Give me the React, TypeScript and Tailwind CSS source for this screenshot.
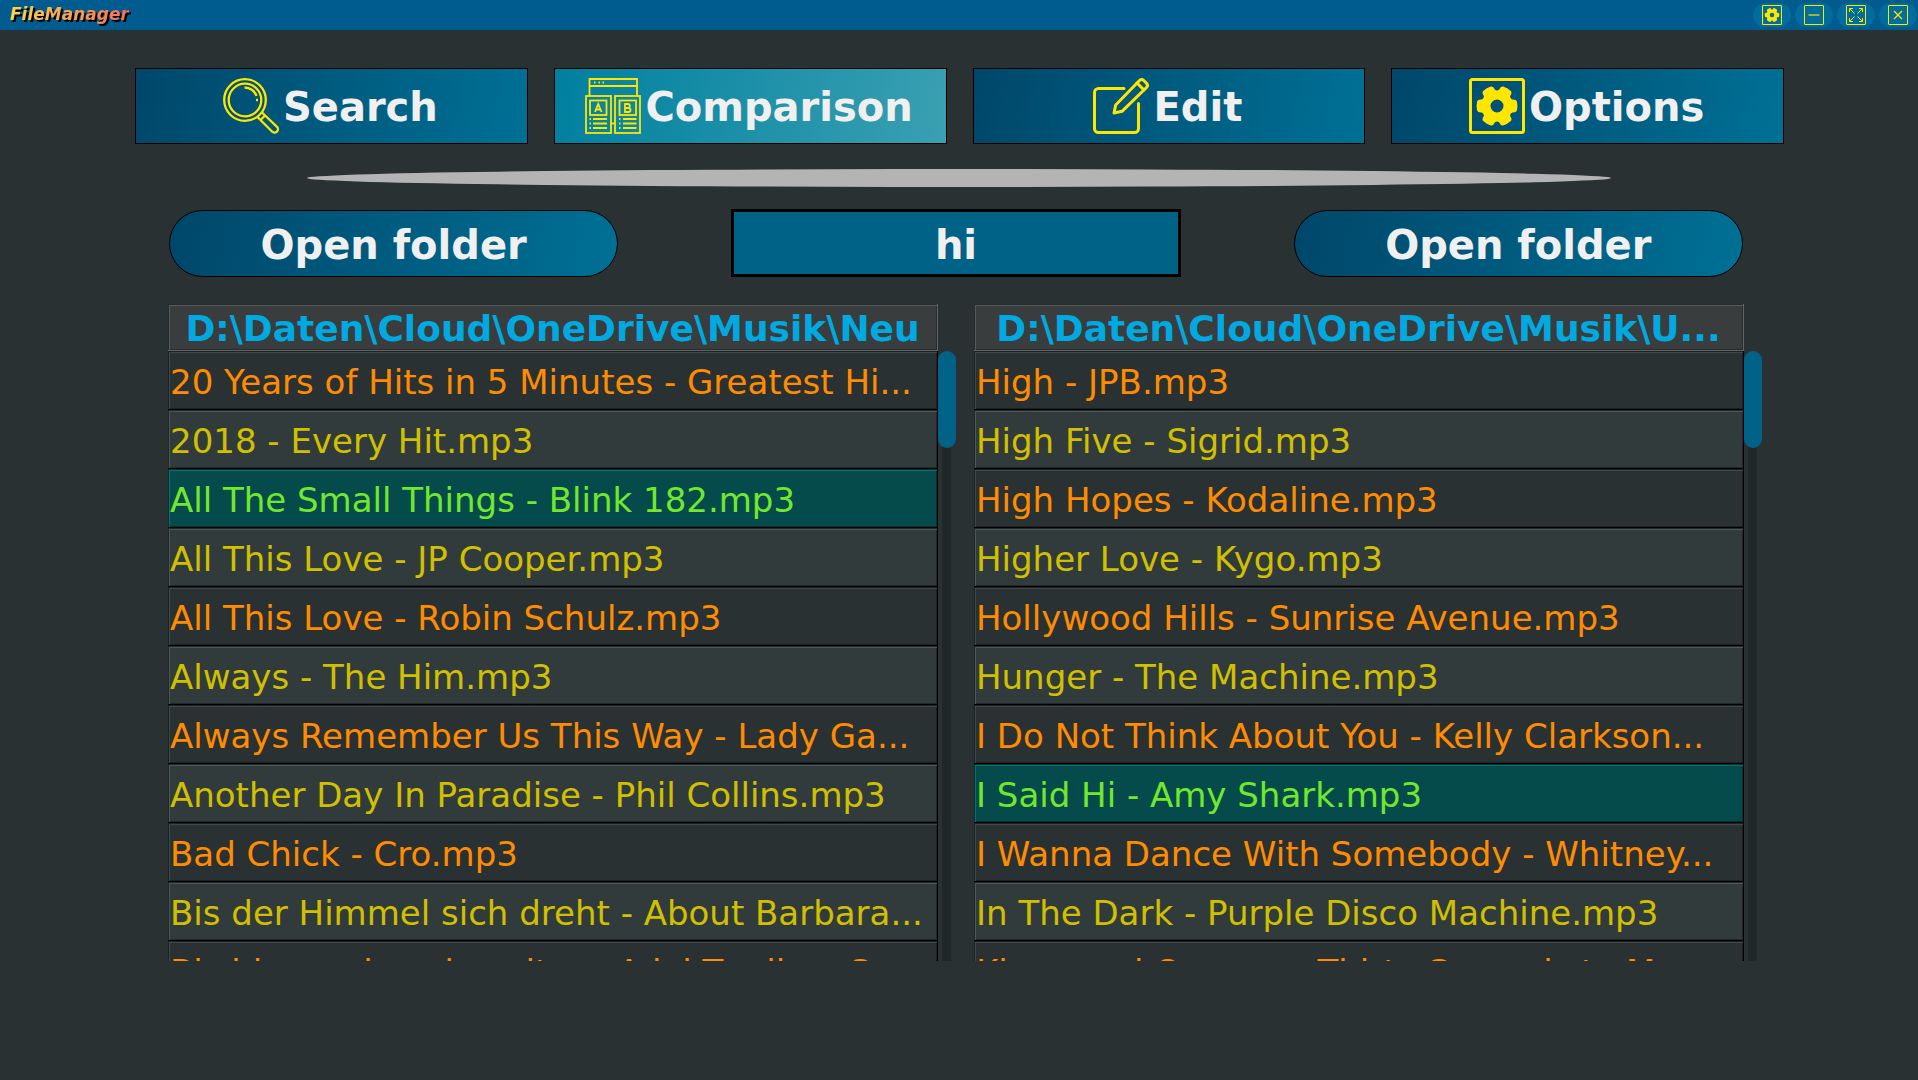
import type { ReactNode } from "react";

type Row = { name: string; match?: boolean };

const leftRows: Row[] = [
  { name: "20 Years of Hits in 5 Minutes - Greatest Hi..." },
  { name: "2018 - Every Hit.mp3" },
  { name: "All The Small Things - Blink 182.mp3", match: true },
  { name: "All This Love - JP Cooper.mp3" },
  { name: "All This Love - Robin Schulz.mp3" },
  { name: "Always - The Him.mp3" },
  { name: "Always Remember Us This Way - Lady Ga..." },
  { name: "Another Day In Paradise - Phil Collins.mp3" },
  { name: "Bad Chick - Cro.mp3" },
  { name: "Bis der Himmel sich dreht - About Barbara..." },
  { name: "Bis hier und noch weiter - Adel Tawil.mp3" },
];

const rightRows: Row[] = [
  { name: "High - JPB.mp3" },
  { name: "High Five - Sigrid.mp3" },
  { name: "High Hopes - Kodaline.mp3" },
  { name: "Higher Love - Kygo.mp3" },
  { name: "Hollywood Hills - Sunrise Avenue.mp3" },
  { name: "Hunger - The Machine.mp3" },
  { name: "I Do Not Think About You - Kelly Clarkson..." },
  { name: "I Said Hi - Amy Shark.mp3", match: true },
  { name: "I Wanna Dance With Somebody - Whitney..." },
  { name: "In The Dark - Purple Disco Machine.mp3" },
  { name: "Kings and Queens - Thirty Seconds to M..." },
];

// Six rounded teeth around (cx, cy), joined by shallow curved valleys.
function gearPath(cx: number, cy: number, outer: number, inner: number) {
  const pts: string[] = [];
  for (let i = 0; i < 6; i++) {
    const base = (i * Math.PI) / 3;
    const at = (r: number, d: number) =>
      `${(cx + r * Math.cos(base + d)).toFixed(2)} ${(cy + r * Math.sin(base + d)).toFixed(2)}`;
    pts.push(`${i === 0 ? "M" : "L"}${at(inner, -0.4)}`);
    pts.push(`Q${at(outer, -0.34)} ${at(outer, -0.22)}`);
    pts.push(`Q${at(outer + 0.6, 0)} ${at(outer, 0.22)}`);
    pts.push(`Q${at(outer, 0.34)} ${at(inner, 0.4)}`);
    pts.push(`Q${at(inner - 1.5, 0.5236)} ${at(inner, 0.647)}`);
  }
  return pts.join(" ") + "Z";
}

function SearchIcon() {
  return (
    <svg viewBox="0 0 56 56" className="size-14 shrink-0" fill="none" stroke="#ffe600" strokeWidth="2.300" aria-hidden="true">
      <circle cx="22" cy="22" r="20.800" />
      <circle cx="22" cy="22" r="16.300" />
      <path d="M21.500 9.500 A12.500 12.500 0 0 1 33.500 18" />
      <path d="M33 22h2" />
      <path d="M34.500 39 L49 53.500 A3.200 3.200 0 0 0 54 48.800 L39 34.500" />
      <path d="M37.500 42 L42 37.500" />
    </svg>
  );
}

function CompareIcon() {
  return (
    <svg viewBox="0 0 56 56" className="size-14 shrink-0" fill="none" stroke="#ffe600" strokeWidth="1.800" aria-hidden="true">
      <path d="M4.500 18V1h47.500v17M4.500 8h47.500" />
      <path d="M9 4.500h1.500M13.500 4.500h1.500M17.500 4.500h1.500" />
      <rect x="1" y="18" width="25" height="37" />
      <rect x="30" y="18" width="25" height="37" />
      <rect x="5" y="22.500" width="16.500" height="14.500" />
      <rect x="34.500" y="22.500" width="16.500" height="14.500" />
      <path d="M10 34 L13.200 26 L16.500 34M11 31.500h4.500" />
      <path d="M40 26v8h3.500q2 0 2-2t-2-2H40h3q1.800 0 1.800-2t-1.800-2Z" />
      <path d="M4.500 41h1.500M8 41h14M4.500 45.500h1.500M8 45.500h14M4.500 50h1.500M8 50h14" />
      <path d="M34 41h1.500M38 41h13.500M34 45.500h1.500M38 45.500h13.500M34 50h1.500M38 50h13.500" />
      <path d="M26 45.500h4" />
    </svg>
  );
}

function EditIcon() {
  return (
    <svg viewBox="0 0 56 56" className="size-14 shrink-0" fill="none" stroke="#ffe600" strokeWidth="3" strokeLinecap="round" strokeLinejoin="round" aria-hidden="true">
      <path d="M31 10.500H5.500a4 4 0 0 0-4 4V50.500a4 4 0 0 0 4 4H41.500a4 4 0 0 0 4-4V25.500" />
      <path d="M21 35l1.700-8L46.500 2.500q2.200-2 4.300 0l2.700 2.700q2 2.200 0 4.300L29 33.300Z" />
      <path d="M44 5l7 7" />
    </svg>
  );
}

function GearIcon({ className }: { className: string }) {
  return (
    <svg viewBox="0 0 56 56" className={className} aria-hidden="true">
      <rect x="1.500" y="1.500" width="53" height="53" rx="2" fill="none" stroke="#ffe600" strokeWidth="3" />
      <path
        d={`${gearPath(28, 28, 20.4, 16.4)} M34.500 28a6.500 6.500 0 1 0 -13 0a6.500 6.500 0 1 0 13 0Z`}
        fill="#ffe600"
        fillRule="evenodd"
      />
    </svg>
  );
}

function NavButton({ icon, label, active }: { icon: ReactNode; label: string; active?: boolean }) {
  return (
    <button
      type="button"
      className={`flex h-[76px] items-center justify-center border border-black pr-[2px] text-[40px] font-bold text-[#f0f0f0] ${
        active
          ? "bg-[linear-gradient(100deg,#00809f,#3aa0b2)]"
          : "bg-[linear-gradient(100deg,#00476a,#007095)]"
      }`}
    >
      {icon}
      <span className="pt-[2px] pl-1">{label}</span>
    </button>
  );
}

function OpenFolder() {
  return (
    <button
      type="button"
      className="h-[67px] rounded-full border border-black bg-[linear-gradient(100deg,#00476a,#007095)] pt-[2px] text-[40px] font-bold text-[#f0f0f0]"
    >
      Open folder
    </button>
  );
}

function WindowButton({ label, children }: { label: string; children: ReactNode }) {
  return (
    <button type="button" aria-label={label} className="flex h-6 w-[38px] items-center justify-center rounded-full bg-[#006d9c]">
      {children}
    </button>
  );
}

function FramedGlyph({ children }: { children: ReactNode }) {
  return (
    <svg viewBox="0 0 20 20" className="size-5" fill="none" stroke="#ffe600" aria-hidden="true">
      <rect x="0.500" y="0.500" width="19" height="19" rx="0.500" />
      {children}
    </svg>
  );
}

function FileTable({ path, rows }: { path: string; rows: Row[] }) {
  return (
    <div className="flex min-w-0 flex-1">
      <div className="h-[657px] min-w-0 flex-1 overflow-hidden">
        <table className="w-full table-fixed border-separate border-spacing-0 whitespace-nowrap text-[34px] leading-[54px]">
          <thead>
            <tr>
              <th className="h-[47px] overflow-hidden border-r border-b border-[#626666] bg-[#393d3d] p-0 pt-1 text-center text-[36px] leading-[42px] font-bold text-[#00a9e0] shadow-[inset_1px_1px_0_#262b2b,inset_2px_2px_0_#555a5a,inset_-1px_-1px_0_#262b2b]">
                {path}
              </th>
            </tr>
          </thead>
          <tbody>
            {rows.map((row, i) => (
              <tr key={row.name}>
                <td
                  className={`h-[59px] overflow-hidden border-r border-b border-black p-0 pt-1 pl-[2px] ${
                    row.match
                      ? "bg-[#054b4b] text-[#71e82b] shadow-[inset_1px_1px_0_#033030,inset_2px_2px_0_#087070,inset_-1px_-1px_0_#033030]"
                      : i % 2
                        ? "bg-[#323b3c] text-[#d0c000] shadow-[inset_1px_1px_0_#222829,inset_2px_2px_0_#4b5859,inset_-1px_-1px_0_#222829]"
                        : "bg-[#293133] text-[#ff8c00] shadow-[inset_1px_1px_0_#1c2223,inset_2px_2px_0_#3d494b,inset_-1px_-1px_0_#1c2223]"
                  }`}
                >
                  {row.name}
                </td>
              </tr>
            ))}
          </tbody>
        </table>
      </div>
      <div className="mt-[47px] flex h-[610px] w-[18px] flex-col" aria-hidden="true">
        <div className="z-10 h-[97px] shrink-0 rounded-full bg-[#006287]" />
        <div className="-mt-2 ml-1 w-[9px] flex-1 bg-[#1f2729]" />
      </div>
    </div>
  );
}

export default function App() {
  return (
    <div className="min-h-screen bg-[#293133] font-['DejaVu_Sans',Verdana,sans-serif]">
      <header className="flex h-[30px] items-center justify-between bg-[#005b8f] pr-px pl-[10px]">
        <h1 className="drop-shadow-[2px_2px_0_#000]">
          <span className="bg-linear-to-r from-[#ffd54a] to-[#ff6a50] bg-clip-text text-[17px] font-bold text-transparent italic">
            FileManager
          </span>
        </h1>
        <div className="flex gap-1">
          <WindowButton label="Settings">
            <GearIcon className="size-5" />
          </WindowButton>
          <WindowButton label="Minimize">
            <FramedGlyph>
              <path d="M4.500 10h11" strokeWidth="2" opacity="0.600" />
            </FramedGlyph>
          </WindowButton>
          <WindowButton label="Maximize">
            <FramedGlyph>
              <path d="M3.500 7V3.500H7M3.500 3.500l5 5M13 3.500h3.500V7M16.500 3.500l-5 5M3.500 13v3.500H7M3.500 16.500l5-5M13 16.500h3.500V13M16.500 16.500l-5-5" />
            </FramedGlyph>
          </WindowButton>
          <WindowButton label="Close">
            <FramedGlyph>
              <path d="M6 6l8 8M14 6l-8 8" strokeWidth="1.300" />
            </FramedGlyph>
          </WindowButton>
        </div>
      </header>

      <main>
        <nav className="mt-[38px] grid grid-cols-4 gap-[26px] pr-[134px] pl-[135px]">
          <NavButton icon={<SearchIcon />} label="Search" />
          <NavButton icon={<CompareIcon />} label="Comparison" active />
          <NavButton icon={<EditIcon />} label="Edit" />
          <NavButton icon={<GearIcon className="size-14 shrink-0" />} label="Options" />
        </nav>

        <div className="mx-[16%] mt-[25px] h-[18px] rounded-[50%] bg-[#b4b4b4]" />

        <div className="mt-[22px] grid grid-cols-3 items-end gap-[113px] pr-[175px] pl-[169px]">
          <OpenFolder />
          <input
            aria-label="Search term"
            defaultValue="hi"
            className="h-[68px] w-full min-w-0 border-3 border-black bg-[#006287] pt-1 text-center text-[40px] font-bold text-[#f0f0f0] outline-none"
          />
          <OpenFolder />
        </div>

        <div className="mt-[27px] flex gap-[18px] pr-[156px] pl-[168px]">
          <FileTable path="D:\Daten\Cloud\OneDrive\Musik\Neu" rows={leftRows} />
          <FileTable path="D:\Daten\Cloud\OneDrive\Musik\U..." rows={rightRows} />
        </div>
      </main>
    </div>
  );
}
